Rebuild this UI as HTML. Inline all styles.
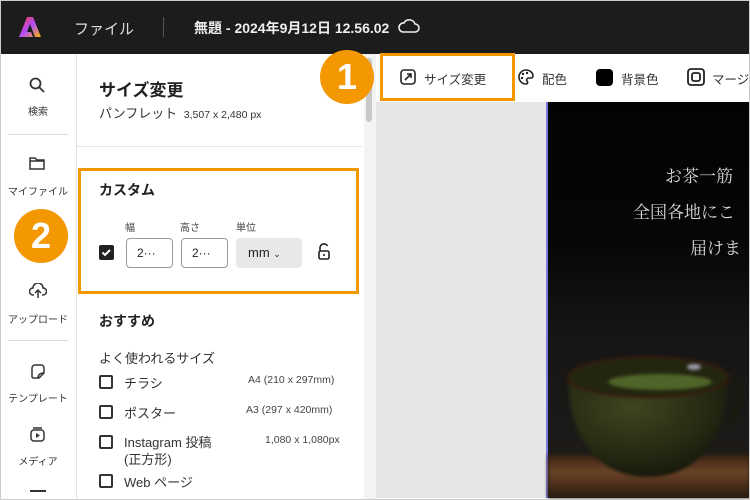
<!DOCTYPE html>
<html><head><meta charset="utf-8"><style>
*{margin:0;padding:0;box-sizing:border-box}
body{width:750px;height:500px;overflow:hidden;background:#fff;font-family:"Liberation Sans","Noto Sans CJK JP",sans-serif;position:relative;color:#222}
.a{position:absolute}
.top{left:0;top:0;width:750px;height:54px;background:#1c1c1c;color:#ddd}
.rail{left:0;top:54px;width:77px;height:446px;background:#fff;border-right:1px solid #e2e2e2}
.ri{position:absolute;left:0;width:76px;text-align:center;font-size:10px;color:#333}
.panel{left:77px;top:54px;width:287px;height:446px;background:#fff}
.cb{position:absolute;width:14px;height:14px;border:2px solid #333;border-radius:2px;background:#fff}
.t{position:absolute;font-size:13px;color:#333;white-space:nowrap}
.s{position:absolute;font-size:10.5px;color:#444;white-space:nowrap}
.ob{border:3px solid #f39800;position:absolute}
.circ{position:absolute;width:54px;height:54px;border-radius:50%;background:#f39800;color:#fff;font-size:36px;font-weight:bold;text-align:center;line-height:54px}
.jp{font-family:"Liberation Serif","Noto Serif CJK SC",serif;color:#d8d8d8;font-size:17px;position:absolute;white-space:nowrap}
</style></head><body>
<div class="a top">
  <svg class="a" style="left:19px;top:17px" width="22" height="20" viewBox="0 0 22 20"><defs><linearGradient id="g" x1="0" y1="0" x2="1" y2="1"><stop offset="0" stop-color="#ff3c3c"/><stop offset=".5" stop-color="#b04cff"/><stop offset="1" stop-color="#ffb400"/></linearGradient></defs><path d="M8 0h6l8 20h-6l-5-13-3 8h4l2 5H0z" fill="url(#g)"/></svg>
  <div class="a" style="left:74px;top:18px;font-size:15px;color:#ddd">ファイル</div>
  <div class="a" style="left:163px;top:17px;width:1px;height:20px;background:#555"></div>
  <div class="a" style="left:194px;top:18px;font-size:14px;color:#eee;font-weight:bold">無題 - 2024年9月12日 12.56.02</div>
  <svg class="a" style="left:398px;top:18px" width="22" height="16" viewBox="0 0 22 16"><path d="M5 14h12a4 4 0 0 0 0-8 6 6 0 0 0-11-1 4.5 4.5 0 0 0-1 9z" fill="none" stroke="#eee" stroke-width="1.6"/></svg>
</div>
<div class="a rail">
  <svg class="a" style="left:29px;top:23px" width="16" height="16" viewBox="0 0 16 16"><circle cx="6.5" cy="6.5" r="5" fill="none" stroke="#333" stroke-width="1.8"/><path d="M10 10l5 5" stroke="#333" stroke-width="1.8"/></svg>
  <div class="ri" style="top:49px">検索</div>
  <div class="a" style="left:8px;top:80px;width:60px;height:1px;background:#ddd"></div>
  <svg class="a" style="left:29px;top:102px" width="16" height="14" viewBox="0 0 16 14"><path d="M1 2h5l2 2h7v9H1z M1 5h14" fill="none" stroke="#333" stroke-width="1.5"/></svg>
  <div class="ri" style="top:129px">マイファイル</div>
  <svg class="a" style="left:29px;top:229px" width="18" height="16" viewBox="0 0 18 16"><path d="M5 12H4a3.5 3.5 0 0 1 0-7 5 5 0 0 1 10 0 3.5 3.5 0 0 1 0 7h-1M9 15V7M6 10l3-3 3 3" fill="none" stroke="#333" stroke-width="1.5"/></svg>
  <div class="ri" style="top:257px">アップロード</div>
  <div class="a" style="left:8px;top:286px;width:60px;height:1px;background:#ddd"></div>
  <svg class="a" style="left:29px;top:309px" width="17" height="17" viewBox="0 0 17 17"><path d="M3 14V5a3 3 0 0 1 3-3h6a3 3 0 0 1 3 3v5l-5 5H5a2 2 0 0 1-2-1z M9 15c0-3 2-5 6-5" fill="none" stroke="#333" stroke-width="1.5"/></svg>
  <div class="ri" style="top:336px">テンプレート</div>
  <svg class="a" style="left:29px;top:372px" width="17" height="17" viewBox="0 0 17 17"><rect x="2" y="4" width="13" height="11" rx="3" fill="none" stroke="#333" stroke-width="1.5"/><path d="M4 2h9" stroke="#333" stroke-width="1.5"/><path d="M7 7l4 2.5L7 12z" fill="#333"/></svg>
  <div class="ri" style="top:399px">メディア</div>
  <div class="a" style="left:30px;top:436px;width:16px;height:2px;background:#333"></div>
</div>
<div class="a panel">
  <div class="t" style="left:22px;top:22px;font-size:17px;font-weight:bold;color:#222">サイズ変更</div>
  <div class="t" style="left:22px;top:49px;font-size:13px">パンフレット <span style="font-size:10.5px">&nbsp;3,507 x 2,480 px</span></div>
  <div class="a" style="left:0;top:92px;width:285px;height:1px;background:#e6e6e6"></div>
  <div class="t" style="left:22px;top:126px;font-size:14px;font-weight:bold;color:#222">カスタム</div>
  <div class="s" style="left:48px;top:165px;font-size:10px">幅</div>
  <div class="s" style="left:103px;top:165px;font-size:10px">高さ</div>
  <div class="s" style="left:159px;top:165px;font-size:10px">単位</div>
  <div class="a" style="left:22px;top:191px;width:15px;height:15px;border-radius:2px;background:#222"><svg width="15" height="15" viewBox="0 0 15 15"><path d="M3.5 7.5l2.5 2.5 5-5" fill="none" stroke="#fff" stroke-width="2"/></svg></div>
  <div class="a" style="left:49px;top:184px;width:47px;height:30px;border:1.5px solid #999;border-radius:4px;font-size:12px;padding:7px 0 0 10px">2···</div>
  <div class="a" style="left:104px;top:184px;width:47px;height:30px;border:1.5px solid #999;border-radius:4px;font-size:12px;padding:7px 0 0 10px">2···</div>
  <div class="a" style="left:159px;top:184px;width:66px;height:30px;background:#e8e8e8;border-radius:4px;font-size:13px;padding:7px 0 0 12px">mm <span style="font-size:9px">&#8964;</span></div>
  <svg class="a" style="left:240px;top:189px" width="14" height="18" viewBox="0 0 14 18"><path d="M3 8V5a4 4 0 0 1 7.5-2" fill="none" stroke="#222" stroke-width="1.6"/><rect x="2" y="8" width="10" height="8" rx="1.5" fill="none" stroke="#222" stroke-width="1.6"/><path d="M7 11v2" stroke="#222" stroke-width="1.6"/></svg>
  <div class="t" style="left:22px;top:257px;font-size:14px;font-weight:bold;color:#222">おすすめ</div>
  <div class="t" style="left:22px;top:294px">よく使われるサイズ</div>
  <div class="cb" style="left:22px;top:321px"></div><div class="t" style="left:47px;top:319px">チラシ</div><div class="s" style="left:171px;top:320px">A4 (210 x 297mm)</div>
  <div class="cb" style="left:22px;top:351px"></div><div class="t" style="left:47px;top:349px">ポスター</div><div class="s" style="left:169px;top:350px">A3 (297 x 420mm)</div>
  <div class="cb" style="left:22px;top:381px"></div><div class="t" style="left:47px;top:380px;line-height:17px">Instagram 投稿<br>(正方形)</div><div class="s" style="left:188px;top:380px">1,080 x 1,080px</div>
  <div class="cb" style="left:22px;top:420px"></div><div class="t" style="left:47px;top:418px">Web ページ</div>
</div>
<div class="a" style="left:364px;top:54px;width:12px;height:446px;background:#f3f3f3"></div>
<div class="a" style="left:366px;top:58px;width:6px;height:64px;background:#c8c8c8;border-radius:3px"></div>
<div class="a" style="left:376px;top:54px;width:374px;height:48px;background:#fff"></div>
<div class="a" style="left:376px;top:102px;width:170px;height:396px;background:#e6e6e6"></div>
<div class="a" style="left:546px;top:102px;width:2px;height:396px;background:#7b7be0"></div>
<div class="a" style="left:548px;top:102px;width:202px;height:396px;background:linear-gradient(#030303 0,#060606 140px,#151515 230px,#1c1a18 330px,#201d18 400px)"></div>
<div class="a" style="left:548px;top:455px;width:202px;height:43px;background:linear-gradient(#3a2415,#6b4326 40%,#2a1a10);filter:blur(2px)"></div>
<svg class="a" style="left:548px;top:102px;filter:blur(1.5px)" width="202" height="396" viewBox="0 0 202 396"><defs><radialGradient id="c" cx=".4" cy=".3" r=".8"><stop offset="0" stop-color="#3e4620"/><stop offset=".6" stop-color="#252912"/><stop offset="1" stop-color="#121209"/></radialGradient></defs><path d="M170 275c25-5 30 25 10 45" fill="none" stroke="#1a1a10" stroke-width="7"/><path d="M20 275c0 60 30 100 80 100s80-40 80-100z" fill="url(#c)"/><ellipse cx="100" cy="275" rx="80" ry="20" fill="#22260f" stroke="#3a1a10" stroke-width="2"/><ellipse cx="112" cy="280" rx="52" ry="8" fill="#4f6428"/><ellipse cx="146" cy="265" rx="7" ry="3" fill="#99a"/></svg>
<div class="jp" style="left:665px;top:162px">お茶一筋</div>
<div class="jp" style="left:633px;top:198px">全国各地にこ</div>
<div class="jp" style="left:690px;top:234px">届けま</div>
<svg class="a" style="left:400px;top:69px" width="16" height="16" viewBox="0 0 16 16"><rect x="1" y="1" width="14" height="14" rx="3" fill="none" stroke="#222" stroke-width="1.6"/><path d="M7 5h4v4M11 5L5 11" fill="none" stroke="#222" stroke-width="1.6"/></svg>
<div class="t" style="left:424px;top:69px;font-size:12.5px">サイズ変更</div>
<svg class="a" style="left:517px;top:68px" width="18" height="18" viewBox="0 0 18 18"><path d="M9 2a7 7 0 1 0 0 14c2 0 2-2 1-3s0-3 2-3h2a2 2 0 0 0 2-2c0-3-3-6-7-6z" fill="none" stroke="#222" stroke-width="1.6"/><circle cx="6" cy="6" r="1.2" fill="#222"/><circle cx="10" cy="5" r="1.2" fill="#222"/><circle cx="5" cy="10" r="1.2" fill="#222"/></svg>
<div class="t" style="left:542px;top:69px;font-size:12.5px">配色</div>
<div class="a" style="left:596px;top:69px;width:17px;height:17px;border-radius:4px;background:#000"></div>
<div class="t" style="left:621px;top:69px;font-size:12.5px">背景色</div>
<svg class="a" style="left:687px;top:68px" width="18" height="18" viewBox="0 0 18 18"><rect x="1" y="1" width="16" height="16" rx="3" fill="none" stroke="#222" stroke-width="1.8"/><rect x="5" y="5" width="8" height="8" rx="2" fill="none" stroke="#222" stroke-width="1.8"/></svg>
<div class="t" style="left:712px;top:69px;font-size:12.5px">マージ</div>
<div class="ob" style="left:380px;top:53px;width:135px;height:48px"></div>
<div class="ob" style="left:78px;top:168px;width:281px;height:126px"></div>
<div class="circ" style="left:320px;top:50px">1</div>
<div class="circ" style="left:14px;top:209px">2</div>
<div class="a" style="left:0;top:0;width:750px;height:500px;border:1px solid #ccc;pointer-events:none"></div>
</body></html>
